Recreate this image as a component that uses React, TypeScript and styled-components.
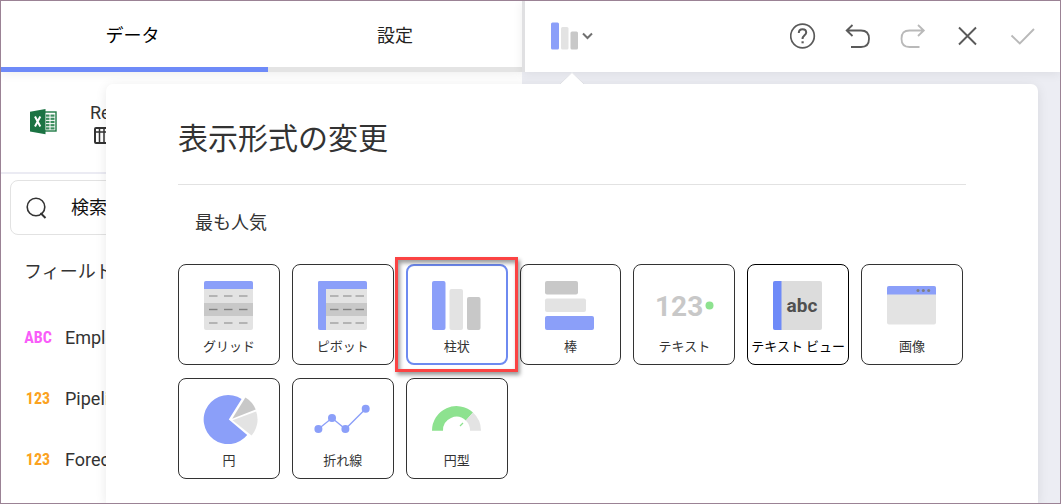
import React from "react";
import styled, { createGlobalStyle, css } from "styled-components";

const BLUE = "#8b9ff9";
const LIGHT = "#e3e3e3";
const MID = "#c8c8c8";

const GlobalStyle = createGlobalStyle`
  *, *::before, *::after { box-sizing: border-box; }
  body {
    margin: 0;
    background: #ffffff;
    color: #333333;
    font-family: Roboto, "Noto Sans CJK JP", sans-serif;
    font-size: 18px;
    font-weight: 400;
  }
  button, input {
    font: inherit;
    color: inherit;
  }
  h1, h2, ul { margin: 0; padding: 0; font-weight: inherit; }
  ul { list-style: none; }
`;

const Frame = styled.div`
  position: relative;
  display: flex;
  min-height: 100vh;
  overflow: hidden;
  border: 1px solid #9b8295;
`;

const Sidebar = styled.aside`
  flex: 0 0 521px;
  background: #ffffff;
`;

const Tabs = styled.div`
  display: flex;
  height: 71px;
  background: #ffffff;
  box-shadow: 0 2px 10px rgba(0, 0, 0, 0.07);
`;

const Tab = styled.button<{ $active?: boolean }>`
  flex: ${(p) => (p.$active ? "0 0 267px" : "1")};
  padding: ${(p) => (p.$active ? "0 4px 1px 0" : "0 0 1px")};
  border: 0;
  border-bottom: 5px solid ${(p) => (p.$active ? "#6e8af8" : "#e4e4e4")};
  background: transparent;
  color: ${(p) => (p.$active ? "#000000" : "#222222")};
`;

const DataSource = styled.div`
  display: flex;
  gap: 32px;
  height: 102px;
  padding: 30px 28px 0;
  border-bottom: 2px solid #ebebf3;
`;

const SourceIcon = styled.svg`
  margin-top: 7px;
`;

const SourceText = styled.div`
  display: flex;
  flex-direction: column;
  gap: 3px;
  line-height: 22px;
`;

const Search = styled.label`
  display: flex;
  align-items: center;
  gap: 23px;
  height: 55px;
  margin: 6px 8px 0 9px;
  padding: 0 15px;
  border: 1px solid #e2e2e2;
  border-radius: 8px;
`;

const SearchInput = styled.input`
  flex: 1;
  min-width: 0;
  padding: 0;
  border: 0;
  outline: 0;
  background: transparent;
  &::placeholder { color: #111111; opacity: 1; }
`;

const FieldsTitle = styled.h2`
  margin: 22px 0 20px;
  padding-left: 23px;
  font-size: 18px;
  line-height: 30px;
`;

const Field = styled.li`
  display: flex;
  align-items: center;
  gap: 13px;
  height: 61px;
  padding-left: 23px;
`;

const FieldType = styled.span<{ $color: string }>`
  width: 28px;
  color: ${(p) => p.$color};
  font-family: "Roboto Condensed", "Liberation Sans Narrow", Roboto, sans-serif;
  font-size: 16px;
  font-weight: 700;
  text-align: center;
`;

const Workspace = styled.main`
  flex: 1;
  min-width: 0;
  background: #ecedf3;
`;

const Toolbar = styled.div`
  display: flex;
  align-items: center;
  height: 71px;
  padding: 0 10px 2px 26px;
  border-left: 3px solid #e0e0e2;
  background: #ffffff;
  box-shadow: 0 2px 10px rgba(0, 0, 0, 0.07);
`;

const ChartPicker = styled.button`
  display: flex;
  align-items: center;
  gap: 3px;
  margin-right: auto;
  padding: 0;
  border: 0;
  background: transparent;
  color: #707070;
`;

const ToolButton = styled.button<{ $muted?: boolean }>`
  display: grid;
  place-items: center;
  width: 55px;
  height: 44px;
  padding: 0;
  border: 0;
  background: transparent;
  color: ${(p) => (p.$muted ? "#b9b9b9" : "#5a5a5a")};
`;

const LineIcon = styled.svg`
  fill: none;
  stroke: currentColor;
  stroke-width: 2;
`;

const Popup = styled.section`
  position: absolute;
  top: 83px;
  right: 22px;
  bottom: 0;
  left: 105px;
  padding: 33px 72px 0;
  border-radius: 7px 7px 0 0;
  background: #ffffff;
  box-shadow: 0 2px 12px rgba(0, 0, 0, 0.09);
`;

const PopupArrow = styled.svg`
  position: absolute;
  top: -12px;
  left: 453px;
`;

const PopupTitle = styled.h1`
  padding-bottom: 23px;
  border-bottom: 1px solid #e2e2e2;
  font-size: 30px;
  line-height: 44px;
`;

const GroupTitle = styled.h2`
  margin: 25px 0 28px;
  padding-left: 17px;
  font-size: 18px;
  line-height: 26px;
`;

const Tiles = styled.ul`
  display: grid;
  grid-template-columns: repeat(7, minmax(0, 1fr));
  gap: 13px 12px;
  margin-right: 3px;
`;

const TileItem = styled.li<{ $marked?: boolean }>`
  position: relative;
  ${(p) =>
    p.$marked &&
    css`
      z-index: 1;
      &::after {
        content: "";
        position: absolute;
        inset: -7px -10px -7px -11px;
        border: 3px solid #fb4343;
        box-shadow: 2px 3px 4px rgba(0, 0, 0, 0.4),
          inset 2px 3px 4px rgba(0, 0, 0, 0.4);
        pointer-events: none;
      }
    `}
`;

const Tile = styled.button<{ $selected?: boolean; $strong?: boolean }>`
  display: flex;
  flex-direction: column;
  align-items: center;
  gap: 8px;
  width: 100%;
  height: 101px;
  padding: ${(p) => (p.$selected ? "15px 0 0" : "16px 0 0")};
  border: ${(p) => (p.$selected ? "2px solid #6e8af0" : "1px solid #333333")};
  border-color: ${(p) => p.$strong && "#000000"};
  border-radius: 8px;
  background: #ffffff;
  color: ${(p) => (p.$strong ? "#000000" : "#333333")};
  font-size: 13px;
  line-height: 16px;
  white-space: nowrap;
`;

const TileArt = styled.svg`
  display: block;
  flex: none;
  font-family: Roboto, sans-serif;
  font-weight: 700;
`;

const Rows = ({ dashes }: { dashes: number[] }) => (
  <>
    <rect x="5" width="49" height="49" rx="2" fill={LIGHT} />
    <rect x="5" y="22" width="49" height="13" fill={MID} />
    {[15, 28.5, 42].map((y) =>
      dashes.map((x) => (
        <path key={`${x}-${y}`} d={`M${x} ${y}h8.5`} stroke={y === 28.5 ? "#828282" : "#9f9f9f"} strokeWidth="1.4" />
      ))
    )}
    <path d="M5 8V2a2 2 0 0 1 2-2h45a2 2 0 0 1 2 2v6z" fill={BLUE} />
  </>
);

const art: Record<string, React.ReactNode> = {
  grid: <Rows dashes={[10, 25, 40]} />,
  pivot: (
    <>
      <Rows dashes={[17, 30, 42.5]} />
      <path d="M5 2a2 2 0 0 1 2-2h6v49H7a2 2 0 0 1-2-2z" fill={BLUE} />
    </>
  ),
  column: (
    <>
      <rect x="5" width="13.5" height="49" rx="2" fill={BLUE} />
      <rect x="22.5" y="8" width="13.5" height="41" rx="2" fill={LIGHT} />
      <rect x="40" y="16" width="13.5" height="33" rx="2" fill={MID} />
    </>
  ),
  bar: (
    <>
      <rect x="5" width="33" height="13.5" rx="2" fill={MID} />
      <rect x="5" y="17.5" width="41" height="13.5" rx="2" fill={LIGHT} />
      <rect x="5" y="35" width="49" height="14" rx="2" fill={BLUE} />
    </>
  ),
  text: (
    <>
      <text x="1" y="34.5" fontSize="28" fill={MID}>123</text>
      <circle cx="55.5" cy="24.5" r="4" fill="#8de28f" />
    </>
  ),
  textView: (
    <>
      <rect x="5" width="49" height="49" rx="2" fill="#dcdcdc" />
      <path d="M5 2a2 2 0 0 1 2-2h6.5v49H7a2 2 0 0 1-2-2z" fill="#6e8af8" />
      <text x="34" y="31" fontSize="19" textAnchor="middle" fill="#505050">abc</text>
    </>
  ),
  image: (
    <>
      <rect x="5" y="5" width="49" height="38.5" rx="2" fill={LIGHT} />
      <path d="M5 13.5V7a2 2 0 0 1 2-2h45a2 2 0 0 1 2 2v6.5z" fill={BLUE} />
      {[36, 41.3, 46.7].map((x) => (
        <circle key={x} cx={x} cy="9.5" r="1.5" fill="#808080" />
      ))}
    </>
  ),
  pie: (
    <>
      <path d="M29.8 24.6 42.6 4.1A24.5 24.5 0 1 0 48.2 40z" fill={BLUE} />
      <path d="M33.2 23.7 46.4 2.5A24.5 24.5 0 0 1 56.7 14.5z" fill={MID} />
      <path d="M33.5 25.3 57.2 16.5A24.5 24.5 0 0 1 52.6 40.5z" fill={LIGHT} />
    </>
  ),
  line: (
    <g fill={BLUE}>
      <path d="M5.4 34 19 23l13.4 11L52.7 13.7" fill="none" stroke={BLUE} strokeWidth="1.3" />
      <circle cx="5.4" cy="34" r="4" />
      <circle cx="19" cy="23" r="4" />
      <circle cx="32.4" cy="34" r="4" />
      <circle cx="52.7" cy="13.7" r="4" />
    </g>
  ),
  gauge: (
    <>
      <path d="M5 35.7a24.5 24.5 0 0 1 41-18.2L38.8 25.5A13.5 13.5 0 0 0 16 35.7z" fill="#8de28f" />
      <path d="M46 17.5a24.5 24.5 0 0 1 8 18.2H43a13.5 13.5 0 0 0-4.2-10.2z" fill={LIGHT} />
      <path d="M33 31 36 28" stroke="#8de28f" strokeWidth="1.3" />
    </>
  ),
};

const tiles = [
  { art: "grid", label: "グリッド" },
  { art: "pivot", label: "ピボット" },
  { art: "column", label: "柱状", selected: true },
  { art: "bar", label: "棒" },
  { art: "text", label: "テキスト" },
  { art: "textView", label: "テキスト ビュー", strong: true },
  { art: "image", label: "画像" },
  { art: "pie", label: "円" },
  { art: "line", label: "折れ線" },
  { art: "gauge", label: "円型" },
];

const fields = [
  { type: "ABC", color: "#f95cf9", name: "Emplo" },
  { type: "123", color: "#fba220", name: "Pipelin" },
  { type: "123", color: "#fba220", name: "Foreca" },
];

export default function App() {
  return (
    <>
      <GlobalStyle />
      <Frame>
        <Sidebar>
          <Tabs role="tablist">
            <Tab $active role="tab" aria-selected="true">データ</Tab>
            <Tab role="tab" aria-selected="false">設定</Tab>
          </Tabs>
          <DataSource>
            <SourceIcon width="29" height="26" viewBox="0 0 29 26" aria-hidden="true">
              <rect x="14.5" y="3" width="12.5" height="19" fill="#fff" stroke="#1f7a45" strokeWidth="1.4" />
              <g fill="#3c8d5e">
                {[5.5, 8.7, 11.9, 15.1, 18.3].map((y) => (
                  <React.Fragment key={y}>
                    <rect x="17" y={y} width="3.5" height="2.2" />
                    <rect x="21.5" y={y} width="4" height="2.2" />
                  </React.Fragment>
                ))}
              </g>
              <path d="M1 2.8 16.500 0v25.200L1 22.400z" fill="#1b7343" />
              <path d="M6 7.5 11.3 17.5M11.3 7.5 6 17.5" stroke="#fff" strokeWidth="2" />
            </SourceIcon>
            <SourceText>
              Re
              <LineIcon width="22" height="17" viewBox="0 0 22 17" aria-hidden="true">
                <rect x="5" y="1" width="16" height="15" rx="1" />
                <path d="M5 5h16M9.5 1v15M14 1v15" strokeWidth="1.5" />
              </LineIcon>
            </SourceText>
          </DataSource>
          <Search>
            <LineIcon width="22" height="24" viewBox="0 0 22 24" aria-hidden="true">
              <circle cx="10" cy="11" r="8.8" strokeWidth="1.6" />
              <path d="M14.5 17 19.5 22" />
            </LineIcon>
            <SearchInput type="text" placeholder="検索" aria-label="検索" />
          </Search>
          <FieldsTitle>フィールド</FieldsTitle>
          <ul>
            {fields.map((f) => (
              <Field key={f.name}>
                <FieldType $color={f.color}>{f.type}</FieldType>
                {f.name}
              </Field>
            ))}
          </ul>
        </Sidebar>

        <Workspace>
          <Toolbar>
            <ChartPicker aria-label="表示形式の変更" aria-expanded="true">
              <svg width="28" height="28" viewBox="0 0 28 28">
                <rect x="0" y="0.5" width="8" height="27" rx="1.5" fill={BLUE} />
                <rect x="10" y="5" width="7.5" height="22.5" rx="1.5" fill={LIGHT} />
                <rect x="19.5" y="9.5" width="7.5" height="18" rx="1.5" fill={MID} />
              </svg>
              <LineIcon width="12" height="8" viewBox="0 0 12 8">
                <path d="M1 1.500 5.500 6 10 1.500" />
              </LineIcon>
            </ChartPicker>
            <ToolButton aria-label="ヘルプ">
              <LineIcon width="26" height="26" viewBox="0 0 26 26">
                <circle cx="12.5" cy="13" r="11.8" strokeWidth="1.7" />
                <path d="M8.8 10c0-2.300 1.500-3.700 3.700-3.700s3.700 1.300 3.700 3.300c0 2.700-3.700 2.900-3.700 6.400" />
                <path d="M11.5 19.3h2.200" />
              </LineIcon>
            </ToolButton>
            <ToolButton aria-label="元に戻す">
              <LineIcon width="26" height="26" viewBox="0 0 26 26">
                <path d="M7.500 2 1.700 7.500l5.800 5.500M1.700 7.500H16c6 0 8 3 8 8.200s-2 8.300-8 8.300H6" strokeWidth="1.8" />
              </LineIcon>
            </ToolButton>
            <ToolButton $muted aria-label="やり直し">
              <LineIcon width="26" height="26" viewBox="0 0 26 26">
                <path d="m18 2 5.800 5.500L18 13M23.800 7.500H9.500c-6 0-8 3-8 8.200s2 8.300 8 8.300h10" strokeWidth="1.8" />
              </LineIcon>
            </ToolButton>
            <ToolButton aria-label="閉じる">
              <LineIcon width="26" height="26" viewBox="0 0 26 26">
                <path d="m4 4.500 17 17M21 4.500l-17 17" strokeWidth="1.9" />
              </LineIcon>
            </ToolButton>
            <ToolButton $muted aria-label="完了">
              <LineIcon width="26" height="26" viewBox="0 0 26 26">
                <path d="m1.500 12.500 8.300 8L24 6" strokeWidth="1.9" />
              </LineIcon>
            </ToolButton>
          </Toolbar>
        </Workspace>

        <Popup aria-label="表示形式の変更">
          <PopupArrow width="26" height="13" viewBox="0 0 26 13" aria-hidden="true">
            <path d="M1 12 13 0l12 12v1H1z" fill="#ffffff" />
            <path d="M1 12 13 .5 25 12" fill="none" stroke="#d9dae0" strokeWidth="0.8" />
          </PopupArrow>
          <PopupTitle>表示形式の変更</PopupTitle>
          <GroupTitle>最も人気</GroupTitle>
          <Tiles>
            {tiles.map((t) => (
              <TileItem key={t.art} $marked={t.selected}>
                <Tile $selected={t.selected} $strong={t.strong} aria-pressed={!!t.selected}>
                  <TileArt width="60" height="50" viewBox="0 0 60 50" aria-hidden="true">
                    {art[t.art]}
                  </TileArt>
                  {t.label}
                </Tile>
              </TileItem>
            ))}
          </Tiles>
        </Popup>
      </Frame>
    </>
  );
}
